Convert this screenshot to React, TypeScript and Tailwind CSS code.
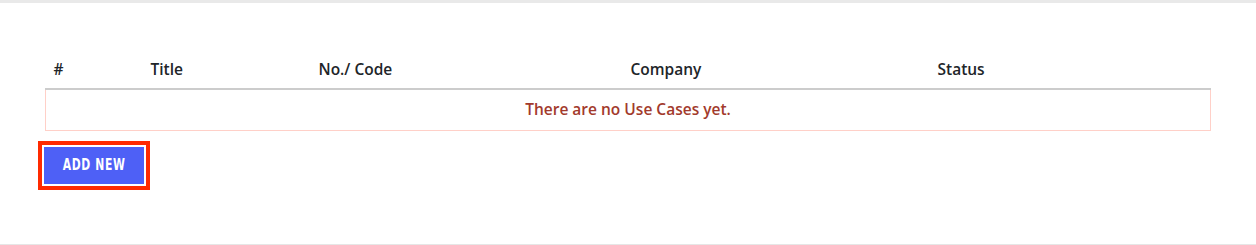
export default function App() {
  const cols = [
    { label: '#', w: 'w-[97px]' },
    { label: 'Title', w: 'w-[168px]' },
    { label: 'No./ Code', w: 'w-[312px]' },
    { label: 'Company', w: 'w-[307px]' },
    { label: 'Status', w: '' },
  ];

  return (
    <div className="w-[1256px] h-[245px] bg-white border-t-[3px] border-[#e9e9e9] border-b border-b-[#e6e6e6] font-['Open_Sans','Noto_Sans',sans-serif]">
      <div className="px-[45px] pt-[49px]">
        <table className="w-full border-collapse">
          <thead>
            <tr className="border-b-2 border-[#cccccc]">
              {cols.map((c) => (
                <th
                  key={c.label}
                  className={`${c.w} text-left px-2 pt-2 pb-[10px] text-[15.5px] leading-[18px] font-semibold text-[#212529]`}
                >
                  {c.label}
                </th>
              ))}
            </tr>
          </thead>
          <tbody>
            <tr>
              <td
                colSpan={5}
                className="border border-t-0 border-[#ffd0c8] h-[41px] text-center text-[15.5px] font-semibold text-[#a23a2c]"
              >
                There are no Use Cases yet.
              </td>
            </tr>
          </tbody>
        </table>
        <div className="pt-[16px]">
          <button className="ml-[-1px] w-[100px] h-[37px] bg-[#4e60f6] text-white outline-4 outline-[#ff2a00] outline-offset-2 font-['DejaVu_Sans_Condensed',sans-serif] font-bold text-[15px] tracking-[0.05em] uppercase">
            <span className="inline-block scale-x-80">Add New</span>
          </button>
        </div>
      </div>
    </div>
  );
}
